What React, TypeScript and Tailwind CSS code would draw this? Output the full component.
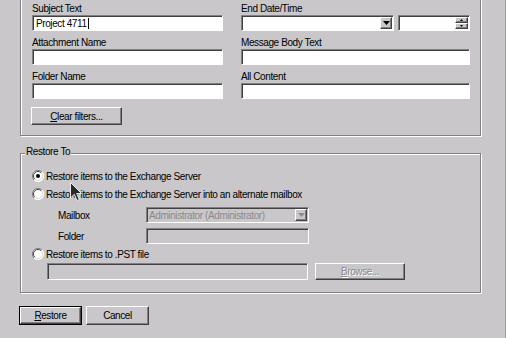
import clsx from 'clsx';
import type { ReactNode } from 'react';

// sunken edit box, classic windows look
const Sunken = ({ className, children }: { className?: string; children?: ReactNode }) => (
  <div
    className={clsx(
      'border border-t-[#808080] border-l-[#808080] border-b-white border-r-white shadow-[inset_1px_1px_0_#404040]',
      className
    )}
  >
    {children}
  </div>
);

const Raised = ({ className, children }: { className?: string; children?: ReactNode }) => (
  <div
    className={clsx(
      'border border-t-white border-l-white border-b-[#404040] border-r-[#404040] shadow-[inset_-1px_-1px_0_#808080] bg-[#c9c7c9]',
      className
    )}
  >
    {children}
  </div>
);

const Arrow = ({ color = '#000' }: { color?: string }) => (
  <svg width="7" height="4" viewBox="0 0 7 4">
    <path d="M0 0 L7 0 L3.5 4 Z" fill={color} />
  </svg>
);

const Radio = ({ checked }: { checked?: boolean }) => (
  <svg width="12" height="12" viewBox="0 0 12 12" className="shrink-0">
    <circle cx="6" cy="6" r="5.5" fill="#fff" />
    <path d="M10 2 A5.5 5.5 0 0 0 2 10" stroke="#808080" strokeWidth="1" fill="none" />
    <path d="M9.2 2.8 A4.5 4.5 0 0 0 2.8 9.2" stroke="#404040" strokeWidth="1" fill="none" />
    <path d="M2 10 A5.5 5.5 0 0 0 10 2" stroke="#fff" strokeWidth="1" fill="none" />
    <path d="M2.8 9.2 A4.5 4.5 0 0 0 9.2 2.8" stroke="#d8d6d8" strokeWidth="1" fill="none" />
    {checked && <circle cx="6" cy="6" r="2" fill="#000" />}
  </svg>
);

const Label = ({ children }: { children: ReactNode }) => (
  <div className="h-[18px] flex items-end leading-[13px]">{children}</div>
);

export default function App() {
  return (
    <div className="relative w-[506px] h-[338px] overflow-hidden bg-[#c9c7c9] border-r border-r-[#9c9a9c] pl-[20px] text-black text-[10px] tracking-[-0.4px] font-['Liberation_Sans',Arial,sans-serif]">
      {/* search filters group (top cut off) */}
      <div className="w-[461px] border-x border-b border-[#808080] shadow-[1px_1px_0_#fff,inset_1px_0_0_#fff] pl-[11px] pb-[10px]">
        <div className="-mt-[3px] grid grid-cols-[191px_229px] gap-x-[18px]">
          <div>
            <Label>Subject Text</Label>
            <Sunken className="h-[16px] bg-white flex items-center pl-[3px]">
              <span>Project 4711</span>
              <span className="ml-[1px] h-[11px] border-l border-black" />
            </Sunken>
          </div>
          <div>
            <Label>End Date/Time</Label>
            <div className="flex gap-[4px]">
              <Sunken className="w-[153px] h-[16px] bg-white flex items-center justify-end pr-[1px]">
                <Raised className="w-[12px] h-[12px] flex items-center justify-center">
                  <Arrow />
                </Raised>
              </Sunken>
              <Sunken className="w-[72px] h-[16px] bg-white flex justify-end pr-[1px] pt-[1px]">
                <div className="flex flex-col">
                  <Raised className="w-[13px] h-[6px] flex items-center justify-center">
                    <svg width="3" height="2" viewBox="0 0 3 2"><path d="M1.5 0 L3 2 L0 2 Z" fill="#000" /></svg>
                  </Raised>
                  <Raised className="w-[13px] h-[6px] flex items-center justify-center">
                    <svg width="3" height="2" viewBox="0 0 3 2"><path d="M0 0 L3 0 L1.5 2 Z" fill="#000" /></svg>
                  </Raised>
                </div>
              </Sunken>
            </div>
          </div>
          <div>
            <Label>Attachment Name</Label>
            <Sunken className="h-[16px] bg-white" />
          </div>
          <div>
            <Label>Message Body Text</Label>
            <Sunken className="h-[16px] bg-white" />
          </div>
          <div>
            <Label>Folder Name</Label>
            <Sunken className="h-[16px] bg-white" />
          </div>
          <div>
            <Label>All Content</Label>
            <Sunken className="h-[16px] bg-white" />
          </div>
        </div>
        <Raised className="mt-[8px] -ml-[1px] w-[91px] h-[18px] flex items-center justify-center">
          <span><span className="underline">C</span>lear filters...</span>
        </Raised>
      </div>

      {/* Restore To group */}
      <div className="relative mt-[17px] w-[461px] border border-[#808080] shadow-[1px_1px_0_#fff,inset_1px_1px_0_#fff] pl-[11px] pt-[13px] pb-[12px]">
        <span className="absolute left-[4px] -top-[8px] px-[1px] leading-[12px] bg-[#c9c7c9]">Restore To</span>

        <div className="h-[18px] flex items-center gap-[2px]">
          <Radio checked />
          <span>Restore items to the Exchange Server</span>
        </div>
        <div className="h-[18px] flex items-center gap-[2px]">
          <Radio />
          <span>Restore items to the Exchange Server into an alternate mailbox</span>
        </div>

        <div className="mt-[4px] h-[16px] flex items-center pl-[26px]">
          <span className="w-[88px]">Mailbox</span>
          <Sunken className="w-[163px] h-[16px] flex items-center justify-between pl-[2px] pr-[1px] text-[#8c8a8c]">
            <span>Administrator (Administrator)</span>
            <Raised className="w-[12px] h-[12px] flex items-center justify-center">
              <Arrow color="#8c8a8c" />
            </Raised>
          </Sunken>
        </div>
        <div className="mt-[5px] h-[16px] flex items-center pl-[26px]">
          <span className="w-[88px]">Folder</span>
          <Sunken className="w-[163px] h-[16px]" />
        </div>

        <div className="mt-[1px] h-[18px] flex items-center gap-[2px]">
          <Radio />
          <span>Restore items to .PST file</span>
        </div>
        <div className="h-[17px] flex items-center pl-[15px] gap-[7px]">
          <Sunken className="w-[261px] h-[17px]" />
          <Raised className="w-[90px] h-[17px] flex items-center justify-center text-[#8c8a8c] [text-shadow:1px_1px_0_#fff]">
            <span><span className="underline">B</span>rowse...</span>
          </Raised>
        </div>
      </div>

      {/* dialog buttons */}
      <div className="mt-[13px] -ml-[1px] flex gap-[4px]">
        <div className="w-[63px] h-[19px] border border-black">
          <Raised className="w-full h-full flex items-center justify-center">
            <span><span className="underline">R</span>estore</span>
          </Raised>
        </div>
        <Raised className="w-[63px] h-[19px] flex items-center justify-center">Cancel</Raised>
      </div>

      {/* mouse pointer */}
      <svg className="absolute left-[70px] top-[182px]" width="13" height="20" viewBox="0 0 13 20">
        <path d="M0.5 0.5 L0.5 16 L4.3 12.3 L7 18.5 L9.3 17.5 L6.7 11.5 L11.5 11.5 Z" fill="#2a2a2a" stroke="#e8e8e8" strokeWidth="1" />
      </svg>
    </div>
  );
}
